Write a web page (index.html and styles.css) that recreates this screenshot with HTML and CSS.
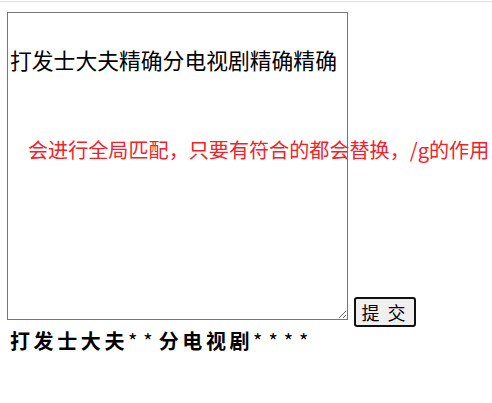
FILE: index.html
```html
<!DOCTYPE html>
<html lang="zh">
<head>
<meta charset="utf-8">
<link rel="stylesheet" href="styles.css">
</head>
<body>
<div class="rule"></div>
<main class="page">
  <form class="form">
    <textarea class="input">打发士大夫精确分电视剧精确精确</textarea>
    <button type="button" class="submit">提 交</button>
    <p class="note">会进行全局匹配，只要有符合的都会替换，/g的作用</p>
  </form>
  <div class="result">打发士大夫<span class="mask">**</span>分电视剧<span class="mask">****</span></div>
</main>
</body>
</html>
```
FILE: styles.css
```css
html, body {
  margin: 0;
  padding: 0;
  background: #fff;
}
body {
  font-family: "Noto Sans CJK SC", "Liberation Sans", sans-serif;
  color: #000;
}
.rule {
  margin-top: 1px;
  height: 1px;
  background: #dedede;
}
.page {
  padding: 10px 0 0 7px;
}
.form {
  position: relative;
  margin: 0;
}
.input {
  width: 335px;
  height: 302px;
  margin: 0;
  padding: 2px;
  border: 1px solid #767676;
  font-family: "Noto Sans CJK SC", "Liberation Sans", sans-serif;
  font-size: 21.8px;
  line-height: 90px;
  color: #000;
  resize: both;
  box-sizing: content-box;
  vertical-align: baseline;
}
.submit {
  margin-left: 2px;
  width: 62px;
  height: 30px;
  padding: 0;
  border: 2px solid #111;
  border-radius: 3px;
  background: #efefef;
  font-family: "Noto Sans CJK SC", serif;
  font-size: 18px;
  letter-spacing: 2px;
  color: #000;
}
.note {
  position: absolute;
  left: 21px;
  top: 123px;
  margin: 0;
  font-size: 20.1px;
  line-height: 30px;
  color: #f0222c;
  white-space: nowrap;
}
.result {
  padding-left: 3px;
  font-size: 20px;
  font-weight: bold;
  letter-spacing: 3.6px;
  line-height: 28px;
}
.mask {
  letter-spacing: 6px;
  font-weight: normal;
}
```
